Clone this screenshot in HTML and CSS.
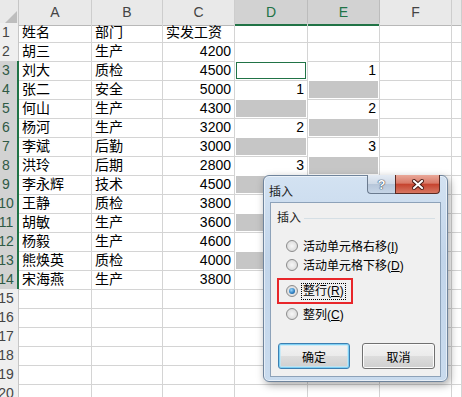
FILE: index.html
```html
<!DOCTYPE html>
<html lang="zh-CN">
<head>
    <meta charset="UTF-8">
    <title>插入</title>
    <link rel="stylesheet" href="styles.css">
</head>
<body>
    <div class="sheet">
        <div class="row head">
            <div class="corner"><span class="tri"></span></div>
            <div class="ch">A</div><div class="ch">B</div><div class="ch">C</div>
            <div class="ch on">D</div><div class="ch on">E</div><div class="ch">F</div><div class="ch"></div>
        </div>
        <div class="row"><div class="rh">1</div><div class="c">姓名</div><div class="c">部门</div><div class="c">实发工资</div><div class="c"></div><div class="c"></div><div class="c"></div><div class="c"></div></div>
        <div class="row"><div class="rh">2</div><div class="c">胡三</div><div class="c">生产</div><div class="c num">4200</div><div class="c"></div><div class="c"></div><div class="c"></div><div class="c"></div></div>
        <div class="row"><div class="rh on">3</div><div class="c">刘大</div><div class="c">质检</div><div class="c num">4500</div><div class="c active"></div><div class="c num">1</div><div class="c"></div><div class="c"></div></div>
        <div class="row"><div class="rh on">4</div><div class="c">张二</div><div class="c">安全</div><div class="c num">5000</div><div class="c num">1</div><div class="c sel"></div><div class="c"></div><div class="c"></div></div>
        <div class="row"><div class="rh on">5</div><div class="c">何山</div><div class="c">生产</div><div class="c num">4300</div><div class="c sel"></div><div class="c num">2</div><div class="c"></div><div class="c"></div></div>
        <div class="row"><div class="rh on">6</div><div class="c">杨河</div><div class="c">生产</div><div class="c num">3200</div><div class="c num">2</div><div class="c sel"></div><div class="c"></div><div class="c"></div></div>
        <div class="row"><div class="rh on">7</div><div class="c">李斌</div><div class="c">后勤</div><div class="c num">3000</div><div class="c sel"></div><div class="c num">3</div><div class="c"></div><div class="c"></div></div>
        <div class="row"><div class="rh on">8</div><div class="c">洪玲</div><div class="c">后期</div><div class="c num">2800</div><div class="c num">3</div><div class="c sel"></div><div class="c"></div><div class="c"></div></div>
        <div class="row"><div class="rh on">9</div><div class="c">李永辉</div><div class="c">技术</div><div class="c num">4500</div><div class="c sel"></div><div class="c"></div><div class="c"></div><div class="c"></div></div>
        <div class="row"><div class="rh on">10</div><div class="c">王静</div><div class="c">质检</div><div class="c num">3800</div><div class="c"></div><div class="c sel"></div><div class="c"></div><div class="c"></div></div>
        <div class="row"><div class="rh on">11</div><div class="c">胡敏</div><div class="c">生产</div><div class="c num">3600</div><div class="c sel"></div><div class="c"></div><div class="c"></div><div class="c"></div></div>
        <div class="row"><div class="rh on">12</div><div class="c">杨毅</div><div class="c">生产</div><div class="c num">4600</div><div class="c"></div><div class="c sel"></div><div class="c"></div><div class="c"></div></div>
        <div class="row"><div class="rh on">13</div><div class="c">熊焕英</div><div class="c">质检</div><div class="c num">4000</div><div class="c sel"></div><div class="c"></div><div class="c"></div><div class="c"></div></div>
        <div class="row"><div class="rh on">14</div><div class="c">宋海燕</div><div class="c">生产</div><div class="c num">3800</div><div class="c"></div><div class="c sel"></div><div class="c"></div><div class="c"></div></div>
        <div class="row"><div class="rh">15</div><div class="c"></div><div class="c"></div><div class="c"></div><div class="c"></div><div class="c"></div><div class="c"></div><div class="c"></div></div>
        <div class="row"><div class="rh">16</div><div class="c"></div><div class="c"></div><div class="c"></div><div class="c"></div><div class="c"></div><div class="c"></div><div class="c"></div></div>
        <div class="row"><div class="rh">17</div><div class="c"></div><div class="c"></div><div class="c"></div><div class="c"></div><div class="c"></div><div class="c"></div><div class="c"></div></div>
        <div class="row"><div class="rh">18</div><div class="c"></div><div class="c"></div><div class="c"></div><div class="c"></div><div class="c"></div><div class="c"></div><div class="c"></div></div>
        <div class="row"><div class="rh">19</div><div class="c"></div><div class="c"></div><div class="c"></div><div class="c"></div><div class="c"></div><div class="c"></div><div class="c"></div></div>
        <div class="row"><div class="rh">20</div><div class="c"></div><div class="c"></div><div class="c"></div><div class="c"></div><div class="c"></div><div class="c"></div><div class="c"></div></div>
    </div>

    <!-- insert dialog -->
    <div class="dialog">
        <div class="titlebar">
            <span class="title">插入</span>
            <div class="caps">
                <span class="cap help">?</span>
                <span class="cap close">
                    <svg width="12" height="11" viewBox="0 0 12 11">
                        <path d="M2 2 L10 9 M10 2 L2 9" stroke="#4a1a14" stroke-width="4" stroke-linecap="square"/>
                        <path d="M2 2 L10 9 M10 2 L2 9" stroke="#ffffff" stroke-width="2" stroke-linecap="square"/>
                    </svg>
                </span>
            </div>
        </div>
        <div class="client">
            <div class="group-head"><span>插入</span><i class="rule"></i></div>
            <div class="opt"><span class="radio"></span><span>活动单元格右移(<u>I</u>)</span></div>
            <div class="opt"><span class="radio"></span><span>活动单元格下移(<u>D</u>)</span></div>
            <div class="mark">
                <div class="opt"><span class="radio checked"></span><span class="focus">整行(<u>R</u>)</span></div>
            </div>
            <div class="opt"><span class="radio"></span><span>整列(<u>C</u>)</span></div>
            <div class="buttons">
                <button class="btn default">确定</button>
                <button class="btn wide">取消</button>
            </div>
        </div>
    </div>
</body>
</html>
```

FILE: styles.css
```css
/* sheet */
body {
    margin: 0;
    width: 462px;
    height: 397px;
    overflow: hidden;
    position: relative;
    background-color: #ffffff;
    font-family: "Liberation Sans", "Noto Sans CJK SC", sans-serif;
}

.row {
    display: grid;
    grid-template-columns: 19px 73px 71px 72px 73px 72px 72px 10px;
    height: 19px;
}

.row.head {
    height: 23px;
}

.corner {
    display: flex;
    align-items: flex-end;
    justify-content: flex-end;
    padding: 0 1px 2px 0;
    background-color: #e9e9e9;
    border-right: 1px solid #c6c6c6;
    border-bottom: 1px solid #b8b8b8;
    box-sizing: border-box;
}

.tri {
    width: 0;
    height: 0;
    border-left: 12px solid transparent;
    border-bottom: 12px solid #bdbdbd;
}

.ch {
    background-color: #e9e9e9;
    border-right: 1px solid #cdcdcd;
    border-bottom: 1px solid #b8b8b8;
    box-sizing: border-box;
    color: #444444;
    font-size: 14px;
    line-height: 24px;
    text-align: center;
}

.ch.on {
    background-color: #d2d2d2;
    color: #217346;
    border-bottom: 2px solid #217346;
    border-right-color: #bcbcbc;
}

.rh {
    display: flex;
    justify-content: center;
    padding-right: 6px;
    background-color: #efefef;
    border-right: 1px solid #c6c6c6;
    border-bottom: 1px solid #d4d4d4;
    box-sizing: border-box;
    color: #444444;
    font-size: 14px;
    line-height: 19px;
}

.rh.on {
    background-color: #d2d2d2;
    color: #2f5a45;
    border-right: 2px solid #217346;
    border-bottom-color: #c0c0c0;
    padding-right: 5px;
}

.c {
    border-right: 1px solid #d4d4d4;
    border-bottom: 1px solid #d4d4d4;
    box-sizing: border-box;
    padding: 0 3px;
    font-size: 14px;
    line-height: 19px;
    color: #000000;
    white-space: nowrap;
    overflow: hidden;
}

.c.num {
    text-align: right;
}

.c.sel {
    background-color: #c6c6c6;
    box-shadow: inset 1px 1px 0 #ffffff, inset -1px -1px 0 #ffffff;
}

.c.active {
    box-shadow: inset 0 0 0 1px #ffffff, inset 0 0 0 2px #217346;
}

/* dialog */
.dialog {
    position: absolute;
    left: 263px;
    top: 175px;
    width: 185px;
    height: 207px;
    box-sizing: border-box;
    border: 1px solid #6f849c;
    border-radius: 6px;
    background: linear-gradient(180deg, #d3e2f2 0%, #c2d5ea 40%, #c9dbee 100%);
    box-shadow: 2px 3px 8px rgba(0, 0, 0, 0.35), inset 0 0 0 1px rgba(255, 255, 255, 0.55);
    font-family: "Liberation Sans", "Noto Sans CJK SC", sans-serif;
    font-size: 12px;
    color: #000000;
}

.titlebar {
    height: 26px;
    display: flex;
    justify-content: space-between;
    align-items: flex-start;
}

.title {
    padding: 8px 0 0 5px;
    line-height: 16px;
    color: #1e1e1e;
}

.caps {
    display: flex;
    margin: -1px 7px 0 0;
}

.cap {
    height: 19px;
    box-sizing: border-box;
    display: flex;
    align-items: center;
    justify-content: center;
}

.help {
    width: 28px;
    border: 1px solid #6b7b8f;
    border-top: none;
    border-right: none;
    border-radius: 0 0 0 4px;
    background: linear-gradient(180deg, #e4ebf4 0%, #cfdae7 48%, #b6c6d9 52%, #c6d5e6 100%);
    color: #ffffff;
    font-weight: bold;
    font-size: 13px;
    text-shadow: 0 0 1px #34455a, 0 0 1px #34455a, 0 0 1px #34455a;
}

.close {
    width: 45px;
    border: 1px solid #5a2a22;
    border-top: none;
    border-radius: 0 0 4px 0;
    background: linear-gradient(180deg, #e9a899 0%, #d97a68 45%, #c6442f 52%, #d77763 100%);
}

.client {
    margin: 0 6px;
    height: 175px;
    box-sizing: border-box;
    border: 1px solid #8da2b9;
    background-color: #f0f0f0;
}

.group-head {
    display: flex;
    align-items: center;
    margin-top: 8px;
    padding-left: 6px;
    line-height: 14px;
    color: #1e1e1e;
}

.rule {
    flex: 1;
    height: 1px;
    margin: 1px 5px 0 3px;
    background-color: #d5dfe5;
}

.opt {
    display: flex;
    align-items: center;
    height: 19px;
    padding-left: 15px;
}

.group-head + .opt {
    margin-top: 11px;
}

.radio {
    width: 12px;
    height: 12px;
    margin-right: 5px;
    box-sizing: border-box;
    border: 1px solid #8c8c8c;
    border-radius: 50%;
    background: radial-gradient(circle, #f7f7f7 0%, #e3e3e3 55%, #cdcdcd 100%);
    display: flex;
    align-items: center;
    justify-content: center;
}

.radio.checked::after {
    content: "";
    width: 6px;
    height: 6px;
    border-radius: 50%;
    background: radial-gradient(circle at 40% 35%, #9ad8ff 0%, #2a7bbd 60%, #0e4a7e 100%);
}

.mark {
    width: 76px;
    height: 26px;
    box-sizing: border-box;
    margin: 4px 0 0 6px;
    border: 2px solid #e8262a;
}

.mark .opt {
    height: 22px;
    padding-left: 7px;
}

.focus {
    margin-left: -2px;
    padding: 0 1px;
    line-height: 15px;
    border: 1px dotted #000000;
}

.buttons {
    display: flex;
    gap: 12px;
    margin-top: 20px;
    padding-left: 7px;
}

.btn {
    width: 72px;
    height: 26px;
    padding: 0;
    border: 1px solid #707070;
    border-radius: 3px;
    background: linear-gradient(180deg, #f2f2f2 0%, #ebebeb 50%, #dddddd 51%, #cfcfcf 100%);
    box-shadow: inset 0 0 0 1px #fbfbfb;
    font-family: "Liberation Sans", "Noto Sans CJK SC", sans-serif;
    font-size: 12px;
    color: #000000;
}

.btn.wide {
    width: 73px;
}

.btn.default {
    border-color: #3c7fb1;
    box-shadow: inset 0 0 0 1px #7fd0f4, inset 0 0 0 2px rgba(190, 232, 250, 0.7);
}
```
